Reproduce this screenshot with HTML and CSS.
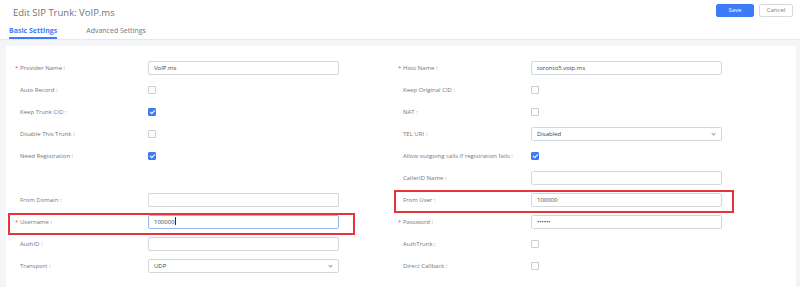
FILE: index.html
```html
<!DOCTYPE html>
<html lang="en">
<head>
  <meta charset="UTF-8">
  <title>Edit SIP Trunk</title>
  <link rel="stylesheet" href="styles.css">
</head>
<body>
<div class="topbar">
  <h1 class="title">Edit SIP Trunk: VoIP.ms</h1>
  <div class="actions">
    <button class="btn btn-primary">Save</button>
    <button class="btn">Cancel</button>
  </div>
</div>
<div class="tabs">
  <span class="tab active">Basic Settings</span>
  <span class="tab">Advanced Settings</span>
</div>

<div class="main">
  <div class="card">
    <div class="form">
      <!-- row 1 -->
      <div class="field"><label class="req">Provider Name :</label><div class="ctl"><div class="input">VoIP.ms</div></div></div>
      <div class="field"><label class="req">Host Name :</label><div class="ctl"><div class="input">toronto5.voip.ms</div></div></div>
      <!-- row 2 -->
      <div class="field"><label>Auto Record :</label><div class="ctl"><span class="check"></span></div></div>
      <div class="field"><label>Keep Original CID :</label><div class="ctl"><span class="check"></span></div></div>
      <!-- row 3 -->
      <div class="field"><label>Keep Trunk CID :</label><div class="ctl"><span class="check on"></span></div></div>
      <div class="field"><label>NAT :</label><div class="ctl"><span class="check"></span></div></div>
      <!-- row 4 -->
      <div class="field"><label>Disable This Trunk :</label><div class="ctl"><span class="check"></span></div></div>
      <div class="field"><label>TEL URI :</label><div class="ctl"><div class="input select">Disabled</div></div></div>
      <!-- row 5 -->
      <div class="field"><label>Need Registration :</label><div class="ctl"><span class="check on"></span></div></div>
      <div class="field"><label>Allow outgoing calls if registration fails :</label><div class="ctl"><span class="check on"></span></div></div>
      <!-- row 6 -->
      <div class="field"></div>
      <div class="field"><label>CallerID Name :</label><div class="ctl"><div class="input"></div></div></div>
      <!-- row 7 -->
      <div class="field"><label>From Domain :</label><div class="ctl"><div class="input"></div></div></div>
      <div class="field mark mark-right"><label>From User :</label><div class="ctl"><div class="input">100000</div></div></div>
      <!-- row 8 -->
      <div class="field mark mark-left"><label class="req">Username :</label><div class="ctl"><div class="input focus">100000<span class="caret"></span></div></div></div>
      <div class="field"><label class="req">Password :</label><div class="ctl"><div class="input dots">&bull;&bull;&bull;&bull;&bull;&bull;</div></div></div>
      <!-- row 9 -->
      <div class="field"><label>AuthID :</label><div class="ctl"><div class="input"></div></div></div>
      <div class="field"><label>AuthTrunk :</label><div class="ctl"><span class="check"></span></div></div>
      <!-- row 10 -->
      <div class="field"><label>Transport :</label><div class="ctl"><div class="input select">UDP</div></div></div>
      <div class="field"><label>Direct Callback :</label><div class="ctl"><span class="check"></span></div></div>
    </div>
  </div>
</div>
</body>
</html>
```

FILE: styles.css
```css
html, body {
  margin: 0;
  height: 100%;
}
body {
  font-family: "Open Sans", "DejaVu Sans", sans-serif;
  font-size: 6px;
  color: #74777c;
  background: #fff;
  display: flex;
  flex-direction: column;
  overflow: hidden;
}

.topbar {
  display: flex;
  justify-content: space-between;
  align-items: center;
  height: 22px;
  padding: 0 7px 0 13px;
}
.title {
  margin: 2px 0 0;
  font-size: 9.5px;
  font-weight: normal;
  color: #707378;
}
.actions {
  display: flex;
  gap: 5px;
  margin-top: -2px;
}
.btn {
  font-family: inherit;
  font-size: 6px;
  height: 13px;
  width: 34px;
  padding: 0;
  border: 1px solid #d6d9de;
  border-radius: 2px;
  background: #fff;
  color: #777;
}
.btn-primary {
  width: 38px;
  background: #3e7bf7;
  border-color: #3e7bf7;
  color: #fff;
}

.tabs {
  display: flex;
  gap: 29px;
  height: 17px;
  padding-left: 9px;
  border-bottom: 1px solid #e6e9ee;
}
.tab {
  font-size: 7px;
  color: #74777c;
  line-height: 17px;
  height: 15px;
}
.active {
  color: #3e7bf7;
  font-weight: bold;
  border-bottom: 2px solid #3e7bf7;
}

.main {
  flex: 1;
  background: #f3f5f8;
  padding: 6px 4px 0 6px;
}
.card {
  background: #fff;
  height: 100%;
  padding-top: 11px;
}
.form {
  display: grid;
  grid-template-columns: 333px 334px;
  grid-auto-rows: 22px;
  column-gap: 50px;
}

.field {
  display: flex;
  align-items: center;
  position: relative;
}
.field label {
  width: 128px;
  padding-left: 14px;
  flex: none;
  position: relative;
}
.req::before {
  content: "*";
  color: #f0464c;
  position: absolute;
  left: 9px;
  top: 0;
}
.ctl {
  width: 191px;
  display: flex;
  align-items: center;
}

.input {
  box-sizing: border-box;
  width: 191px;
  height: 14px;
  border: 1px solid #d4d8de;
  border-radius: 2px;
  padding: 0 5px;
  line-height: 12px;
  color: #444;
  position: relative;
}
.focus {
  border-color: #9bb8f3;
}
.caret {
  display: inline-block;
  width: 1px;
  height: 8px;
  background: #333;
  vertical-align: -1px;
}
.dots {
  font-size: 6px;
  letter-spacing: 0;
}
.select::after {
  content: "";
  position: absolute;
  right: 6px;
  top: 4px;
  width: 2px;
  height: 2px;
  border-right: 1px solid #999;
  border-bottom: 1px solid #999;
  transform: rotate(45deg);
}

.check {
  box-sizing: border-box;
  width: 8px;
  height: 8px;
  border: 1px solid #c9cdd4;
  border-radius: 1px;
  position: relative;
}
.check.on {
  background: #3e7bf7;
  border-color: #3e7bf7;
}
.check.on::after {
  content: "";
  position: absolute;
  left: 2px;
  top: 0;
  width: 2px;
  height: 4px;
  border-right: 1px solid #fff;
  border-bottom: 1px solid #fff;
  transform: rotate(45deg);
}

/* red annotation boxes */
.mark::after {
  content: "";
  position: absolute;
  border: 2px solid #e8323c;
  pointer-events: none;
}
.mark-left::after {
  left: 2px;
  right: -16px;
  top: 2px;
  bottom: -2px;
}
.mark-right::after {
  left: 5px;
  right: -11px;
  top: 1px;
  bottom: -2px;
}
```
